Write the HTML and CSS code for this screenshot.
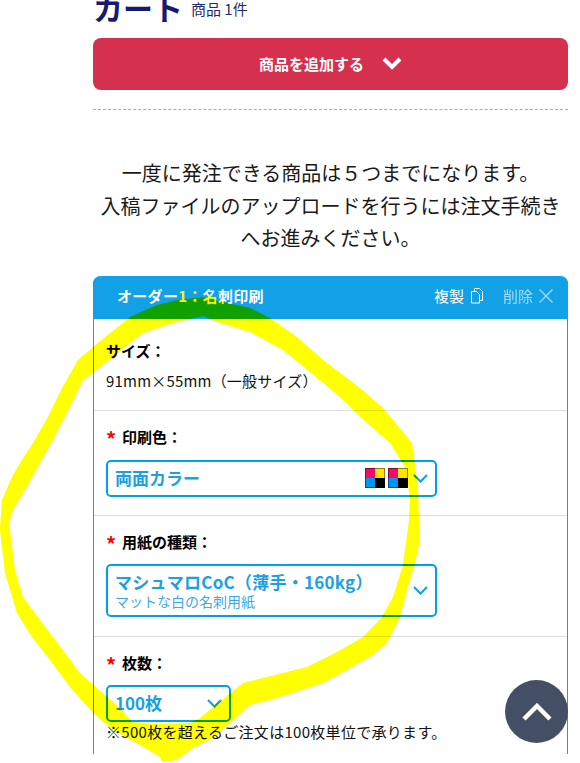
FILE: index.html
```html
<!DOCTYPE html>
<html lang="ja">
<head>
<meta charset="utf-8">
<title>カート</title>
<link rel="stylesheet" href="styles.css">
</head>
<body>
<main class="page">
  <header class="cart-head">
    <h1 class="cart-title">カート</h1>
    <span class="cart-count">商品 1件</span>
  </header>
  <button class="add-btn" type="button">
    <span>商品を追加する</span>
    <svg class="add-chevron" width="20" height="14" viewBox="0 0 20 14"><path d="M2 3l8 8 8-8" fill="none" stroke="#fff" stroke-width="4"/></svg>
  </button>
  <hr class="dash">
  <p class="notice">一度に発注できる商品は５つまでになります。<br>入稿ファイルのアップロードを行うには注文手続きへお進みください。</p>
  <section class="card">
    <div class="card-head">
      <span class="card-title">オーダー<span class="hl">1：</span><span class="hl-half">名</span>刺印刷</span>
      <span class="card-action">複製
        <svg width="14" height="17" viewBox="0 0 14 17"><path d="M1.500 4.500H6.500L9.500 7.500V16H1.500ZM4.500 4V1.500H9.500L12.500 4.500V13.500H10" fill="none" stroke="#fff" stroke-width="1"/></svg>
      </span>
      <span class="card-action card-action-off">削除
        <svg width="14" height="14" viewBox="0 0 14 14"><path d="M.5.500l13 13M13.500.500l-13 13" fill="none" stroke="#fff" stroke-width="1.400"/></svg>
      </span>
    </div>
    <div class="row row-size">
      <div class="label">サイズ：</div>
      <div class="value">91mm×55mm（一般サイズ）</div>
    </div>
    <div class="row row-color">
      <div class="label"><span class="req">*</span>印刷色：</div>
      <div class="select select-wide">
        <span class="select-main">両面カラー</span>
        <span class="cmyk"><i class="m"></i><i class="y"></i><i class="c"></i><i class="k"></i></span>
        <span class="cmyk"><i class="m"></i><i class="y"></i><i class="c"></i><i class="k"></i></span>
        <svg class="chev" width="15" height="9" viewBox="0 0 15 9"><path d="M1 1l6.500 6.500L14 1" fill="none" stroke="#0ea1e8" stroke-width="2"/></svg>
      </div>
    </div>
    <div class="row row-paper">
      <div class="label"><span class="req">*</span>用紙の種類：</div>
      <div class="select select-wide select-tall">
        <div class="select-stack">
          <span class="select-main select-main-long">マシュマロCoC（薄手・160kg）</span>
          <span class="select-sub">マットな白の名刺用紙</span>
        </div>
        <svg class="chev" width="15" height="9" viewBox="0 0 15 9"><path d="M1 1l6.500 6.500L14 1" fill="none" stroke="#0ea1e8" stroke-width="2"/></svg>
      </div>
    </div>
    <div class="row row-qty">
      <div class="label"><span class="req">*</span>枚数：</div>
      <div class="select select-small">
        <span class="select-main">100枚</span>
        <svg class="chev" width="15" height="9" viewBox="0 0 15 9"><path d="M1 1l6.500 6.500L14 1" fill="none" stroke="#0ea1e8" stroke-width="2"/></svg>
      </div>
      <div class="note">※500枚を超えるご注文は100枚単位で承ります。</div>
    </div>
  </section>
</main>
<a class="to-top" href="#"><svg width="32" height="18" viewBox="0 0 32 18"><path d="M3 16L16 3l13 13" fill="none" stroke="#fff" stroke-width="4.500"/></svg></a>
<svg class="scribble" width="580" height="763" viewBox="0 0 580 763">
  <path fill="#ffff00" fill-rule="evenodd" d="M0 530L0 527 2 500 12 477 20 463 33 443 48 417 62 388 78 360 93 347 130 317 157 305 177 300 203 297 227 303 250 308 270 318 297 337 323 360 360 388 383 408 412 443 418 487 419 520 419 545 415 563 407 590 400 617 387 643 373 655 347 670 323 683 293 693 270 700 250 705 237 717 230 723 213 738 193 748 177 760 162 762 160 757 140 745 113 730 93 713 70 687 50 660 32 637 17 613 5 573Z M10 530L15 570 23 597 40 620 53 637 80 673 107 697 122 710 132 722 160 724 190 723 200 718 232 692 243 683 263 678 307 667 337 652 363 637 382 617 393 597 403 565 409 520 410 497 405 467 390 443 367 423 340 397 310 372 283 350 250 332 217 322 203 316 173 323 143 333 130 343 93 373 83 380 70 407 53 440 40 463 25 490 13 510 9 523Z"/>
</svg>
</body>
</html>
```
FILE: styles.css
```css
html, body {
  margin: 0;
  padding: 0;
  background: #fff;
  overflow: hidden;
  height: 763px;
}
body {
  font-family: "Noto Sans CJK JP", "Noto Sans", sans-serif;
  color: #111;
}
.page {
  width: 475px;
  margin-left: 93px;
}
.cart-head {
  display: flex;
  align-items: flex-start;
  gap: 8px;
  height: 38px;
  margin-top: -12px;
}
.cart-title {
  margin: 0;
  font-size: 30px;
  line-height: 38px;
  font-weight: 700;
  color: #171a70;
}
.cart-count {
  margin-top: 11px;
  font-size: 15px;
  line-height: 20px;
  color: #1f2a6b;
}
.add-btn {
  display: flex;
  align-items: center;
  justify-content: center;
  gap: 18px;
  width: 100%;
  height: 52px;
  margin-top: 12px;
  padding: 0 0 2px;
  border: 0;
  border-radius: 8px;
  background: #d6304f;
  color: #fff;
  font: 700 15px "Noto Sans CJK JP", sans-serif;
}
.dash {
  margin: 19px 0 0;
  border: 0;
  border-top: 1px dashed #aaa;
}
.notice {
  margin: 47px 0 0;
  font-size: 20px;
  line-height: 32.500px;
  text-align: center;
  color: #1a1a1a;
}
.card {
  margin-top: 21px;
  height: 478px;
  border: solid #1e9fdc;
  border-width: 0 1px;
  border-radius: 8px 8px 0 0;
  box-sizing: border-box;
}
.card-head {
  display: flex;
  align-items: center;
  height: 43px;
  margin: 0 -1px;
  padding: 0 15px 3px 24px;
  box-sizing: border-box;
  background: #12a0e6;
  border-radius: 8px 8px 0 0;
  color: #fff;
  font-size: 15px;
}
.card-title {
  flex: 1;
  font-weight: 700;
  letter-spacing: .3px;
}
.hl {
  color: #ffff00;
}
.hl-half {
  background: linear-gradient(#fff 50%, #ffff00 50%);
  -webkit-background-clip: text;
  background-clip: text;
  color: transparent;
}
.card-action {
  display: flex;
  align-items: center;
  gap: 6px;
}
.card-action-off {
  margin-left: 19px;
  opacity: .6;
}
.row {
  padding: 0 12px;
  border-bottom: 1px solid #ddd;
  box-sizing: border-box;
}
.row-size { height: 92px; padding-top: 22px; }
.row-color { height: 105px; padding-top: 16px; }
.row-paper { height: 121px; padding-top: 16px; }
.row-qty { height: 117px; padding-top: 16px; border-bottom: 0; }
.label {
  font-size: 15px;
  line-height: 20px;
  font-weight: 700;
  color: #000;
}
.value {
  margin-top: 10px;
  font-size: 15px;
  line-height: 20px;
  letter-spacing: .2px;
}
.req {
  display: inline-block;
  width: 16px;
  font-size: 20px;
  line-height: 0;
  vertical-align: -4px;
  color: #f00;
}
.select {
  display: flex;
  align-items: center;
  margin-top: 13px;
  padding: 0 7px;
  border: 2px solid #00a0e9;
  border-radius: 5px;
  box-sizing: border-box;
  height: 37px;
  color: #1ba0e2;
}
.select-wide { width: 331px; }
.select-tall { height: 53px; margin-top: 12px; }
.select-small { width: 125px; margin-top: 12px; }
.select-main {
  flex: 1;
  font-size: 17px;
  line-height: 20px;
  font-weight: 700;
}
.select-main-long {
  letter-spacing: .25px;
}
.select-stack {
  display: flex;
  flex: 1;
  flex-direction: column;
  gap: 1px;
}
.select-sub {
  font-size: 14px;
  line-height: 16px;
  color: #3aa9e6;
}
.chev {
  flex: none;
  margin-left: 5px;
}
.cmyk {
  display: grid;
  grid-template-columns: 10px 10px;
  grid-auto-rows: 10px;
  flex: none;
  margin-left: 3px;
  outline: 1px solid rgba(0, 0, 0, .45);
  outline-offset: -1px;
}
.cmyk i { display: block; }
.cmyk .m { background: #f50a6a; }
.cmyk .y { background: #ffe600; }
.cmyk .c { background: #0096f0; }
.cmyk .k { background: #000; }
.note {
  font-size: 15px;
  line-height: 20px;
  letter-spacing: .3px;
}
.to-top {
  position: fixed;
  left: 505px;
  top: 680px;
  width: 63px;
  height: 63px;
  display: flex;
  align-items: center;
  justify-content: center;
  border-radius: 50%;
  background: #444f66;
}
.scribble {
  position: fixed;
  left: 0;
  top: 0;
  mix-blend-mode: multiply;
  pointer-events: none;
}
```
